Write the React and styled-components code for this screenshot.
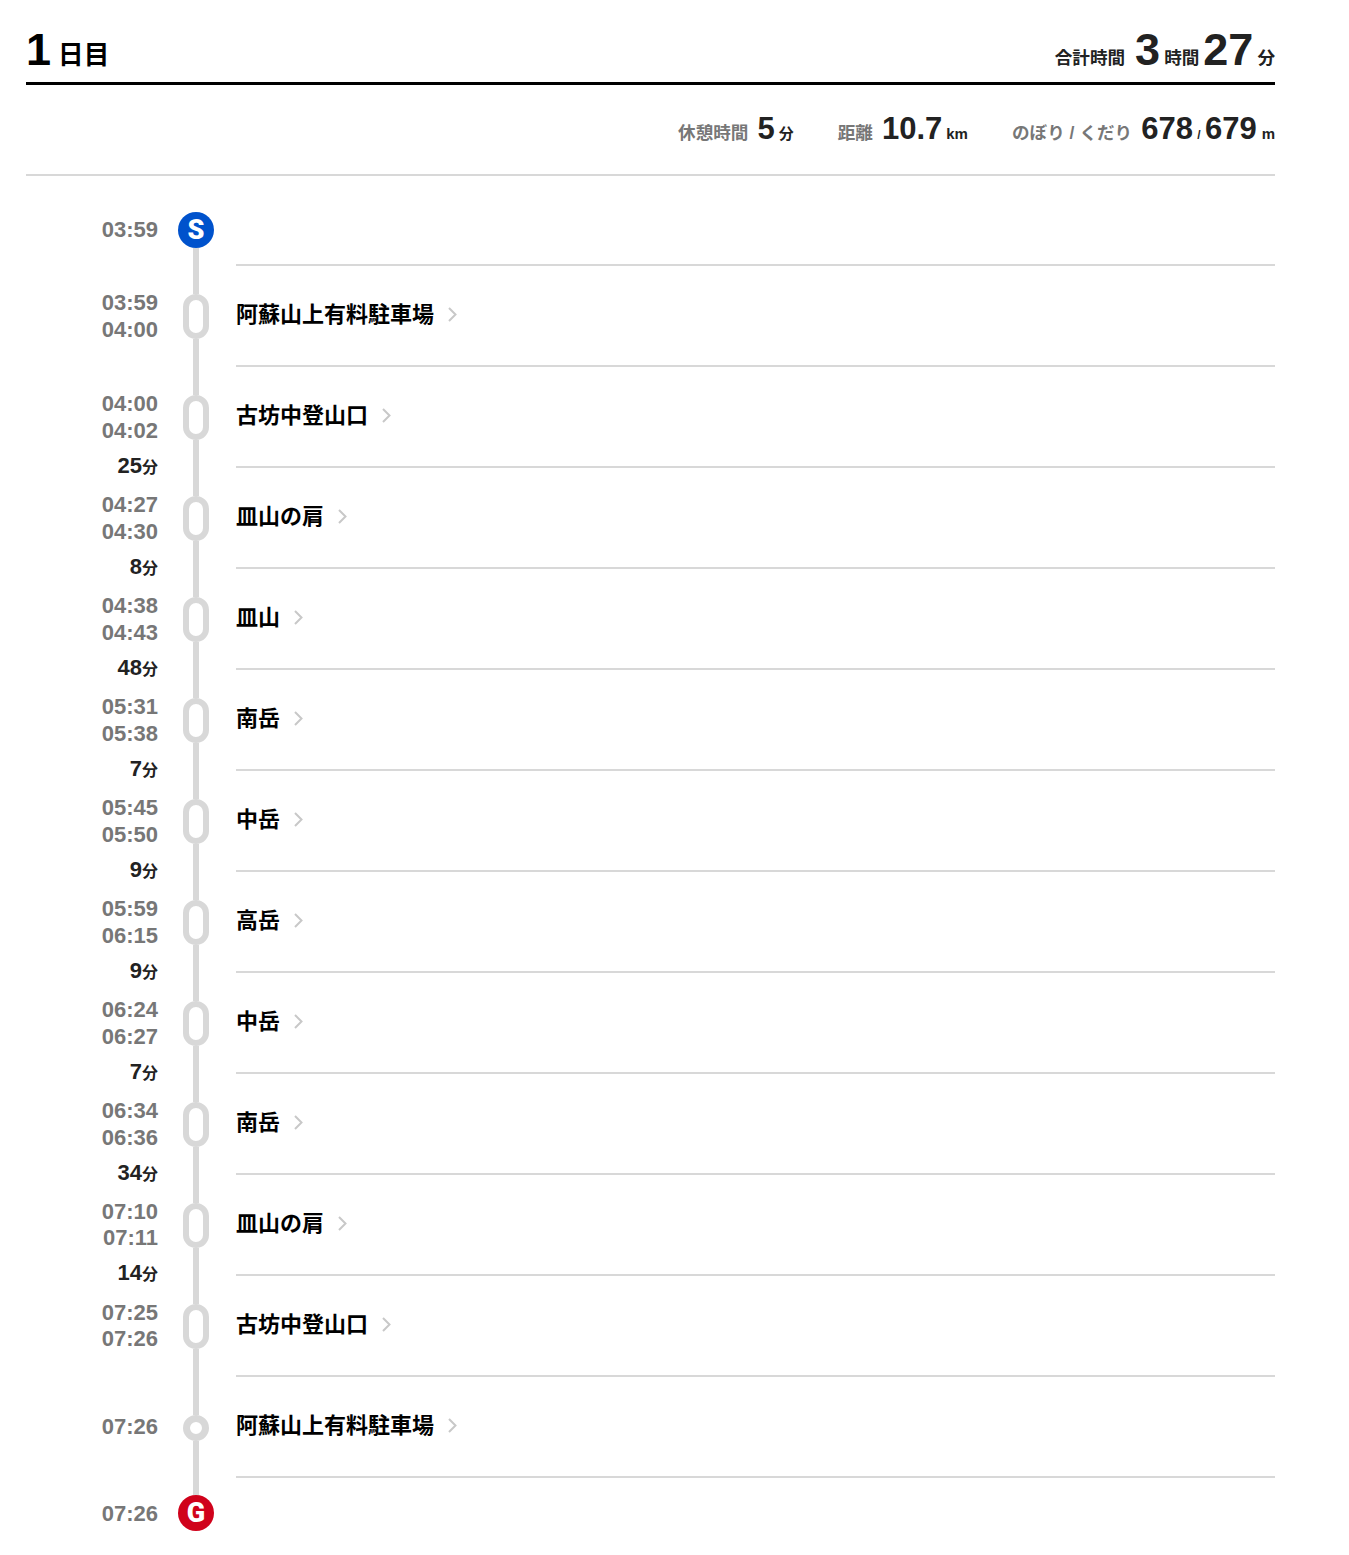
import React from 'react';
import styled, { createGlobalStyle } from 'styled-components';

const GlobalStyle = createGlobalStyle`
  html, body {
    margin: 0;
    padding: 0;
    background: #fff;
    font-family: "Liberation Sans", "Noto Sans CJK JP", sans-serif;
  }
`;

const Page = styled.div`
  width: 1249px;
  padding: 26px 0 24px 26px;
`;

const DayHeader = styled.header`
  display: flex;
  justify-content: space-between;
  align-items: baseline;
  height: 56px;
  border-bottom: 3px solid #000;
  font-weight: 700;
  line-height: 48px;
`;

const DayTitle = styled.h2`
  margin: 0;
  font-size: 25.6px;
  color: #000;

  span:last-child {
    vertical-align: 1px;
  }
`;

const BigNum = styled.span`
  font-size: ${(p) => p.$size || 31}px;
  font-weight: 700;
  color: ${(p) => p.$color || '#222'};
  margin: ${(p) => p.$margin || '0'};
`;

const Unit = styled.span`
  font-size: ${(p) => p.$size || 17.6}px;
  font-weight: 700;
  color: #222;
  vertical-align: ${(p) => p.$raise || 0}px;
`;

const Slash = styled.span`
  margin: 0 1px;
  font-size: 12px;
  color: #222;
`;

const Summary = styled.div`
  display: flex;
  justify-content: flex-end;
  align-items: baseline;
  gap: 44px;
  height: 91px;
  box-sizing: border-box;
  padding-top: 26px;
  border-bottom: 2px solid #d8d8d8;
  font-weight: 700;
  line-height: 36px;
`;

const Stat = styled.div`
  white-space: nowrap;
`;

const StatLabel = styled.span`
  font-size: 17.6px;
  color: #777;
  margin-right: 9px;
`;

const Timeline = styled.div`
  margin-top: 36px;
`;

const Row = styled.div`
  display: flex;
  height: ${(p) => p.$height}px;
`;

const TimeCol = styled.div`
  width: 132px;
  flex: none;
  box-sizing: border-box;
  padding-top: ${(p) => p.$top || 0}px;
  text-align: right;
  font-weight: 700;
`;

const Time = styled.div`
  font-size: 22px;
  line-height: ${(p) => (p.$tight ? 26 : 26.6)}px;
  color: #777;
`;

const Duration = styled.div`
  margin-top: 10px;
  font-size: 22px;
  line-height: 24px;
  color: #222;

  small {
    font-size: 16px;
  }
`;

const Rail = styled.div`
  width: 36px;
  margin: 0 22px 0 20px;
  flex: none;
  display: flex;
  flex-direction: column;
  align-items: center;
`;

const Segment = styled.div`
  flex: 1;
  width: 6px;
  background: #d8d8d8;
`;

const Pill = styled.div`
  width: 26px;
  height: 45px;
  flex: none;
  box-sizing: border-box;
  border: 6px solid #d8d8d8;
  border-radius: 13px;
`;

const Dot = styled.div`
  width: 26px;
  height: 26px;
  flex: none;
  box-sizing: border-box;
  border: 7px solid #d8d8d8;
  border-radius: 50%;
`;

const Badge = styled.div`
  width: 36px;
  height: 36px;
  flex: none;
  border-radius: 50%;
  display: flex;
  align-items: center;
  justify-content: center;
  background: ${(p) => p.$color};
  color: #fff;
  font-family: Roboto, sans-serif;
  font-size: 27px;
  font-weight: 900;
`;

const Body = styled.div`
  flex: 1;
  display: flex;
  align-items: center;
  box-sizing: border-box;
  border-bottom: ${(p) => (p.$plain ? 'none' : '2px solid #d8d8d8')};
`;

const Place = styled.a`
  display: flex;
  align-items: center;
  gap: 14px;
  margin-bottom: 8px;
  font-size: 22px;
  font-weight: 700;
  color: #000;

  svg {
    margin-top: 6px;
  }
`;

const Chevron = () => (
  <svg width="9" height="15" viewBox="0 0 9 15" fill="none" stroke="#c8c8c8" strokeWidth="2">
    <polyline points="1,1 7.5,7.5 1,14" />
  </svg>
);

const stops = [
  { times: ['03:59', '04:00'], name: '阿蘇山上有料駐車場' },
  { times: ['04:00', '04:02'], name: '古坊中登山口', next: '25' },
  { times: ['04:27', '04:30'], name: '皿山の肩', next: '8' },
  { times: ['04:38', '04:43'], name: '皿山', next: '48' },
  { times: ['05:31', '05:38'], name: '南岳', next: '7' },
  { times: ['05:45', '05:50'], name: '中岳', next: '9' },
  { times: ['05:59', '06:15'], name: '高岳', next: '9' },
  { times: ['06:24', '06:27'], name: '中岳', next: '7' },
  { times: ['06:34', '06:36'], name: '南岳', next: '34' },
  { times: ['07:10', '07:11'], name: '皿山の肩', next: '14', tight: true },
  { times: ['07:25', '07:26'], name: '古坊中登山口', tight: true },
];

export default function App() {
  return (
    <Page>
      <GlobalStyle />
      <DayHeader>
        <DayTitle>
          <BigNum $size={45} $color="#000" $margin="0 7px 0 0">1</BigNum>
          <span>日目</span>
        </DayTitle>
        <div>
          <Unit $raise={1}>合計時間</Unit>
          <BigNum $size={45} $margin="0 4px 0 10px">3</BigNum>
          <Unit $raise={1}>時間</Unit>
          <BigNum $size={45} $margin="0 4px">27</BigNum>
          <Unit $raise={1}>分</Unit>
        </div>
      </DayHeader>

      <Summary>
        <Stat>
          <StatLabel>休憩時間</StatLabel>
          <BigNum $margin="0 4px 0 0">5</BigNum>
          <Unit $size={15}>分</Unit>
        </Stat>
        <Stat>
          <StatLabel>距離</StatLabel>
          <BigNum $margin="0 4px 0 0">10.7</BigNum>
          <Unit $size={15}>km</Unit>
        </Stat>
        <Stat>
          <StatLabel>のぼり / くだり</StatLabel>
          <BigNum>678</BigNum>
          <Slash> / </Slash>
          <BigNum $margin="0 5px 0 0">679</BigNum>
          <Unit $size={15}>m</Unit>
        </Stat>
      </Summary>

      <Timeline>
        <Row $height={54}>
          <TimeCol $top={5}>
            <Time>03:59</Time>
          </TimeCol>
          <Rail>
            <Badge $color="#0052cc">S</Badge>
            <Segment />
          </Rail>
          <Body />
        </Row>

        {stops.map((stop, i) => (
          <Row key={i} $height={101}>
            <TimeCol $top={24}>
              {stop.times.map((t, j) => (
                <Time key={j} $tight={stop.tight}>{t}</Time>
              ))}
              {stop.next && (
                <Duration>
                  {stop.next}
                  <small>分</small>
                </Duration>
              )}
            </TimeCol>
            <Rail>
              <Segment />
              <Pill />
              <Segment />
            </Rail>
            <Body>
              <Place>
                {stop.name}
                <Chevron />
              </Place>
            </Body>
          </Row>
        ))}

        <Row $height={101}>
          <TimeCol $top={37}>
            <Time>07:26</Time>
          </TimeCol>
          <Rail>
            <Segment />
            <Dot />
            <Segment />
          </Rail>
          <Body>
            <Place>
              阿蘇山上有料駐車場
              <Chevron />
            </Place>
          </Body>
        </Row>

        <Row $height={53}>
          <TimeCol $top={23}>
            <Time>07:26</Time>
          </TimeCol>
          <Rail>
            <Segment />
            <Badge $color="#d0021b">G</Badge>
          </Rail>
          <Body $plain />
        </Row>
      </Timeline>
    </Page>
  );
}
